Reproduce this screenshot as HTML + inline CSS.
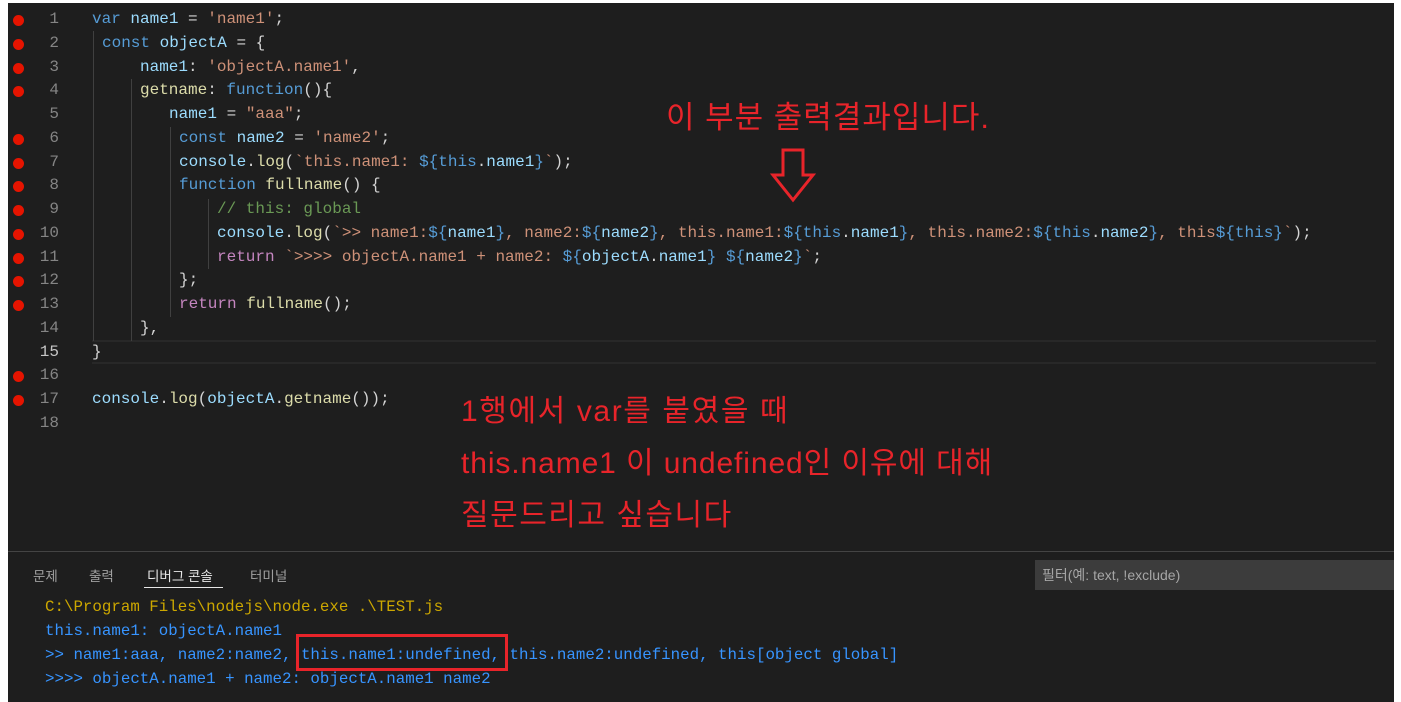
<!DOCTYPE html>
<html><head><meta charset="utf-8"><style>
*{margin:0;padding:0;box-sizing:border-box}
body{width:1401px;height:702px;background:#fff;position:relative;overflow:hidden;font-family:"Liberation Mono",monospace}
#ed{position:absolute;left:8px;top:3px;width:1386px;height:699px;background:#1e1e1e}
.l{position:absolute;font-size:16px;line-height:24px;white-space:pre;color:#d4d4d4}
.n{position:absolute;left:0;width:51px;text-align:right;font-size:16px;line-height:24px;color:#858585}
.d{position:absolute;left:5px;width:11px;height:11px;border-radius:50%;background:#e51400}
.k{color:#569cd6}.v{color:#9cdcfe}.s{color:#ce9178}.f{color:#dcdcaa}.c{color:#6a9955}.p{color:#c586c0}
.g{position:absolute;width:1px;background:#404040}
.r{position:absolute;color:#e8242a;font-family:"Liberation Sans","Noto Sans CJK KR",sans-serif;white-space:pre}
.t{position:absolute;top:565px;font-family:"Liberation Sans","Noto Sans CJK KR",sans-serif;font-size:13.5px;color:#a0a0a0}
.o{position:absolute;left:37px;font-size:15.8px;line-height:24px;white-space:pre;color:#3794ff}
</style></head><body><div id="ed">
<div style="position:absolute;left:84px;top:337px;width:1284px;height:24px;border-top:2px solid #282828;border-bottom:2px solid #282828"></div>
<div class="g" style="left:85px;top:28px;height:310px"></div>
<div class="g" style="left:123px;top:76px;height:262px"></div>
<div class="g" style="left:162px;top:124px;height:190px"></div>
<div class="g" style="left:200px;top:196px;height:70px"></div>
</div>
<div id="lines"></div>
<script>
var L=[
[92,'<span class="k">var</span> <span class="v">name1</span> = <span class="s">\'name1\'</span>;'],
[102,'<span class="k">const</span> <span class="v">objectA</span> = {'],
[140,'<span class="v">name1</span>: <span class="s">\'objectA.name1\'</span>,'],
[140,'<span class="f">getname</span>: <span class="k">function</span>(){'],
[169,'<span class="v">name1</span> = <span class="s">"aaa"</span>;'],
[179,'<span class="k">const</span> <span class="v">name2</span> = <span class="s">\'name2\'</span>;'],
[179,'<span class="v">console</span>.<span class="f">log</span>(<span class="s">`this.name1: </span><span class="k">${</span><span class="k">this</span>.<span class="v">name1</span><span class="k">}</span><span class="s">`</span>);'],
[179,'<span class="k">function</span> <span class="f">fullname</span>() {'],
[217,'<span class="c">// this: global</span>'],
[217,'<span class="v">console</span>.<span class="f">log</span>(<span class="s">`&gt;&gt; name1:</span><span class="k">${</span><span class="v">name1</span><span class="k">}</span><span class="s">, name2:</span><span class="k">${</span><span class="v">name2</span><span class="k">}</span><span class="s">, this.name1:</span><span class="k">${this</span>.<span class="v">name1</span><span class="k">}</span><span class="s">, this.name2:</span><span class="k">${this</span>.<span class="v">name2</span><span class="k">}</span><span class="s">, this</span><span class="k">${this}</span><span class="s">`</span>);'],
[217,'<span class="p">return</span> <span class="s">`&gt;&gt;&gt;&gt; objectA.name1 + name2: </span><span class="k">${</span><span class="v">objectA</span>.<span class="v">name1</span><span class="k">}</span> <span class="k">${</span><span class="v">name2</span><span class="k">}</span><span class="s">`</span>;'],
[179,'};'],
[179,'<span class="p">return</span> <span class="f">fullname</span>();'],
[140,'},'],
[92,'}'],
[92,''],
[92,'<span class="v">console</span>.<span class="f">log</span>(<span class="v">objectA</span>.<span class="f">getname</span>());'],
[92,'']];
var dots=[1,1,1,1,0,1,1,1,1,1,1,1,1,0,0,1,1,0];
var h='';
for(var i=0;i<18;i++){var y=7+i*23.76;
h+='<div class="n" style="top:'+y+'px;'+(i==14?'color:#c6c6c6':'')+'">'+(i+1)+'</div>';
if(dots[i])h+='<div class="d" style="top:'+(y+8)+'px"></div>';
h+='<div class="l" style="left:'+L[i][0]+'px;top:'+y+'px">'+L[i][1]+'</div>';}
document.getElementById('lines').outerHTML='<div style="position:absolute;left:8px;top:0">'+h.replace(/left:(\d+)px;top/g,function(m,a){return 'left:'+(a-8)+'px;top'})+'</div>';
</script>
<div class="r" style="left:666px;top:92px;font-size:31px;letter-spacing:1px">이 부분 출력결과입니다.</div>
<svg style="position:absolute;left:765px;top:147px" width="55" height="58"><path d="M18 3H38V28H48L28 53L8 28H18Z" fill="none" stroke="#e8242a" stroke-width="3"/></svg>
<div class="r" style="left:461px;top:386px;font-size:30px;letter-spacing:1.6px">1행에서 var를 붙였을 때</div>
<div class="r" style="left:461px;top:438px;font-size:30px;letter-spacing:0.9px">this.name1 이 undefined인 이유에 대해</div>
<div class="r" style="left:461px;top:490px;font-size:30px;letter-spacing:1.5px">질문드리고 싶습니다</div>
<div style="position:absolute;left:8px;top:551px;width:1386px;height:1px;background:#444"></div>
<div class="t" style="left:33px">문제</div>
<div class="t" style="left:89px">출력</div>
<div class="t" style="left:147px;color:#e7e7e7">디버그 콘솔</div>
<div style="position:absolute;left:144px;top:587px;width:79px;height:1px;background:#e7e7e7"></div>
<div class="t" style="left:250px">터미널</div>
<div style="position:absolute;left:1035px;top:560px;width:359px;height:30px;background:#3c3c3c;color:#a6a6a6;font-family:'Liberation Sans','Noto Sans CJK KR',sans-serif;font-size:14px;line-height:30px;padding-left:7px">필터(예: text, !exclude)</div>
<div style="position:absolute;left:8px;top:0">
<div class="o" style="top:595px;color:#cca700">C:\Program Files\nodejs\node.exe .\TEST.js</div>
<div class="o" style="top:619px">this.name1: objectA.name1</div>
<div class="o" style="top:643px">&gt;&gt; name1:aaa, name2:name2, this.name1:undefined, this.name2:undefined, this[object global]</div>
<div class="o" style="top:667px">&gt;&gt;&gt;&gt; objectA.name1 + name2: objectA.name1 name2</div>
</div>
<div style="position:absolute;left:296px;top:634px;width:212px;height:37px;border:3px solid #e8242a"></div>
</body></html>
